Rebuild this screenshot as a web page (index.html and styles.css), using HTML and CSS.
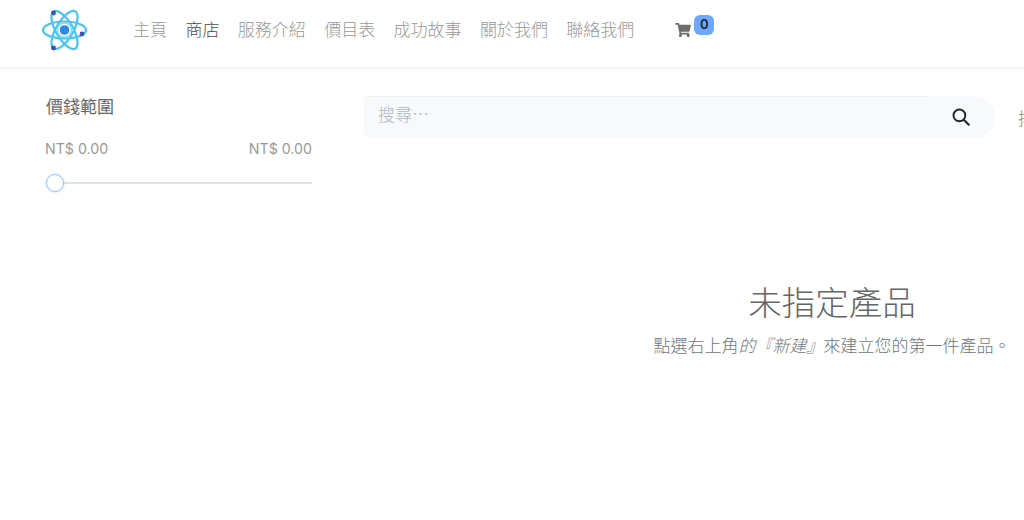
FILE: index.html
```html
<!DOCTYPE html>
<html lang="zh-Hant">
<head>
<meta charset="utf-8">
<title>商店</title>
<link rel="stylesheet" href="styles.css">
</head>
<body>
<header class="site-header">
  <a class="logo" href="#" aria-label="logo">
    <svg width="46" height="44" viewBox="0 0 46 44">
      <g fill="none" stroke="#45c5f0" stroke-width="2.2">
        <ellipse cx="23.5" cy="21" rx="21.5" ry="8.5"/>
        <ellipse cx="23.5" cy="21" rx="21.5" ry="8.5" transform="rotate(60 23.5 21)"/>
        <ellipse cx="23.5" cy="21" rx="21.5" ry="8.5" transform="rotate(120 23.5 21)"/>
      </g>
      <circle cx="23.5" cy="21" r="7" fill="#fff" stroke="#86daf5" stroke-width="1.6"/>
      <circle cx="23.5" cy="21" r="4.8" fill="#2f88e0"/>
      <circle cx="12.5" cy="4" r="2.4" fill="#3f4fb8"/>
      <circle cx="41" cy="25" r="2.4" fill="#3f4fb8"/>
      <circle cx="12.5" cy="39" r="2.4" fill="#3f4fb8"/>
    </svg>
  </a>
  <nav class="main-nav">
    <a href="#">主頁</a>
    <a href="#" class="active">商店</a>
    <a href="#">服務介紹</a>
    <a href="#">價目表</a>
    <a href="#">成功故事</a>
    <a href="#">關於我們</a>
    <a href="#">聯絡我們</a>
  </nav>
  <a class="cart" href="#" aria-label="cart">
    <svg width="16" height="14" viewBox="0 0 576 512"><path fill="#6c6c6c" d="M528 301l47-208c3-15-8-29-23-29H159l-9-47C148 7 139 0 128 0H24C11 0 0 11 0 24v16c0 13 11 24 24 24h70l70 343c-17 10-28 28-28 49 0 31 25 56 56 56s56-25 56-56c0-16-6-30-17-40h210c-11 10-17 24-17 40 0 31 25 56 56 56s56-25 56-56c0-22-13-41-32-50l5-24c3-15-8-29-23-29H218l-7-32h294c11 0 21-8 23-19z"/></svg>
    <span class="badge">0</span>
  </a>
</header>
<main class="shop">
  <aside class="filters">
    <h2 class="filter-title">價錢範圍</h2>
    <div class="price-row"><span>NT$ 0.00</span><span>NT$ 0.00</span></div>
    <div class="slider"><span class="thumb"></span></div>
  </aside>
  <section class="results">
    <div class="toolbar">
      <form class="search">
        <div class="search-input">搜尋…</div>
        <button class="search-btn" type="button" aria-label="search">
          <svg width="18" height="18" viewBox="0 0 18 18"><circle cx="7.4" cy="7.4" r="5.9" fill="none" stroke="#212529" stroke-width="1.9"/><path d="M11.8 11.8l5 5" stroke="#212529" stroke-width="2" stroke-linecap="round"/></svg>
        </button>
      </form>
      <span class="sort-label">排序</span>
    </div>
    <div class="empty">
      <h1>未指定產品</h1>
      <p>點選右上角<em>的『新建』</em>來建立您的第一件產品。</p>
    </div>
  </section>
</main>
</body>
</html>
```
FILE: styles.css
```css
* { box-sizing: border-box; }
html, body { margin: 0; height: 100%; overflow: hidden; background: #fff; }
body {
  width: 1024px;
  font-family: "Noto Sans CJK TC", "Noto Sans", sans-serif;
  font-weight: 300;
  color: #6c757d;
}
a { text-decoration: none; color: inherit; }
.site-header {
  height: 67px;
  display: flex;
  align-items: flex-start;
  padding-left: 41px;
  box-shadow: 0 1px 4px rgba(0,0,0,.09);
}
.logo { display: block; margin-top: 9px; width: 46px; height: 44px; }
.main-nav {
  display: flex;
  gap: 18.4px;
  margin-left: 46px;
  margin-top: 16px;
  font-size: 17px;
  line-height: 25px;
  color: #999;
}
.main-nav .active { color: #4a4a4a; }
.cart { display: flex; align-items: flex-start; margin-left: 41px; margin-top: 15px; }
.cart svg { margin-top: 8px; }
.badge {
  margin-left: 3px;
  width: 20px;
  height: 20px;
  border-radius: 6px;
  background: #6ea8fe;
  color: #212529;
  font: 600 13px/19px Inter, sans-serif;
  text-align: center;
}
.shop { display: flex; width: 1300px; }
.filters { width: 364px; padding: 27px 52px 0 46px; flex: none; }
.filter-title {
  margin: 0;
  font-size: 17px;
  line-height: 24px;
  font-weight: 400;
  color: #666;
}
.price-row {
  display: flex;
  justify-content: space-between;
  margin: 21px 0 0 -1px;
  font: 400 14.2px/20px Inter, sans-serif;
  color: #999;
}
.slider {
  position: relative;
  height: 2px;
  margin-top: 23px;
  background: #dee2e6;
}
.thumb {
  position: absolute;
  left: 0;
  top: -8px;
  width: 18px;
  height: 18px;
  border-radius: 50%;
  background: #fff;
  border: 1px solid #9ec5fe;
  box-shadow: 0 0 2px rgba(13,110,253,.3);
}
.results { flex: 1; padding-top: 29px; }
.toolbar { display: flex; align-items: center; gap: 23px; }
.search { display: flex; width: 631px; height: 42px; flex: none; }
.search-input {
  flex: 1;
  padding-left: 14px;
  background: #f8f9fa;
  border-top: 1px solid #eceeef;
  border-radius: 6px 0 0 6px;
  font-size: 17px;
  line-height: 34px;
  color: #adb5bd;
}
.search-btn {
  width: 68px;
  border: 0;
  padding: 0;
  background: #f8f9fa;
  border-radius: 0 21px 21px 0;
  display: flex;
  align-items: center;
  justify-content: center;
}
.sort-label { font-size: 17px; color: #888; white-space: nowrap; }
.empty { margin-top: 141px; text-align: center; }
.empty h1 {
  margin: 0;
  font-size: 33.5px;
  line-height: 44px;
  font-weight: 300;
  color: #666;
}
.empty p { margin: 10px 0 0; font-size: 17px; line-height: 24px; color: #6c757d; }
.empty em { font-style: italic; }
```
